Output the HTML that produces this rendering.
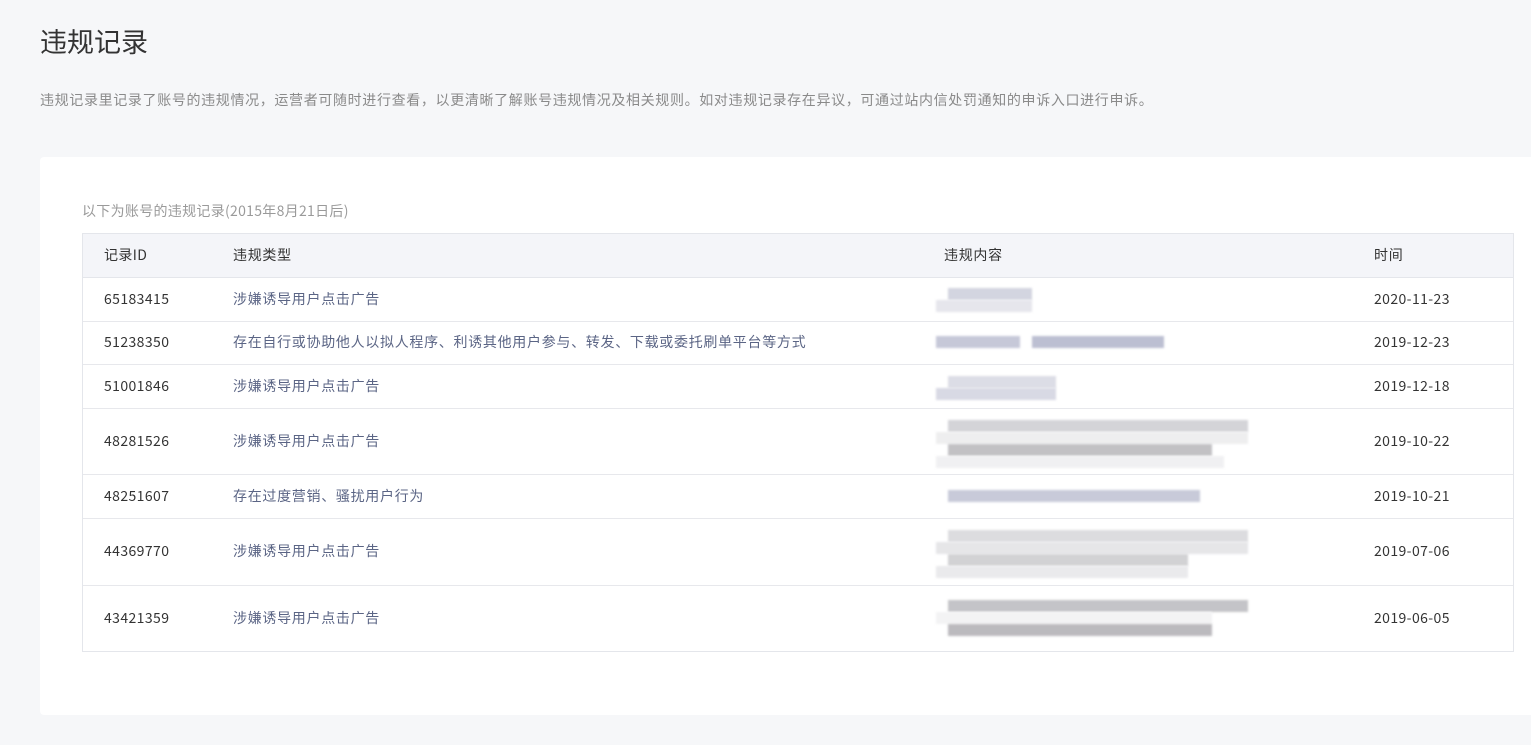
<!DOCTYPE html>
<html><head><meta charset="utf-8"><style>
*{margin:0;padding:0;box-sizing:border-box}
body{width:1531px;height:745px;background:#f6f7f9;font-family:"Noto Sans CJK SC","Liberation Sans",sans-serif;position:relative;overflow:hidden}
.a{position:absolute;white-space:nowrap;line-height:20px}
h1{position:absolute;left:40px;top:22px;font-size:27px;font-weight:normal;color:#333;line-height:38px}
.desc{left:40px;top:90px;font-size:14px;color:#8a8a8a;letter-spacing:0.65px}
.card{position:absolute;left:40px;top:157px;width:1500px;height:558px;background:#fff;border-radius:4px}
.cap{left:82px;top:201px;font-size:14px;color:#9a9a9a;letter-spacing:0.3px}
.tbl{position:absolute;left:82px;top:233px;width:1432px;height:419px;border:1px solid #e4e6eb}
.hd{position:absolute;left:0;top:0;width:100%;height:44px;background:#f4f5f9;border-bottom:1px solid #e4e6eb}
.ln{position:absolute;left:0;width:100%;height:1px;background:#e7e8ec}
.t{font-size:14px;color:#333;letter-spacing:0.4px}
.ty{font-size:14px;color:#5b6585;letter-spacing:0.7px}
.bl{position:absolute;height:12px;filter:blur(1px)}
</style></head><body>
<h1>违规记录</h1>
<div class="a desc">违规记录里记录了账号的违规情况，运营者可随时进行查看，以更清晰了解账号违规情况及相关规则。如对违规记录存在异议，可通过站内信处罚通知的申诉入口进行申诉。</div>
<div class="card"></div>
<div class="a cap">以下为账号的违规记录(2015年8月21日后)</div>
<div class="tbl">
<div class="hd"></div>
<div class="ln" style="top:87px"></div>
<div class="ln" style="top:130px"></div>
<div class="ln" style="top:174px"></div>
<div class="ln" style="top:240px"></div>
<div class="ln" style="top:284px"></div>
<div class="ln" style="top:351px"></div>
</div>
<div class="a t" style="left:104px;top:245px">记录ID</div>
<div class="a ty" style="left:233px;top:245px;color:#333">违规类型</div>
<div class="a ty" style="left:944px;top:245px;color:#333">违规内容</div>
<div class="a ty" style="left:1374px;top:245px;color:#333">时间</div>

<div class="a t" style="left:104px;top:289px">65183415</div><div class="a ty" style="left:233px;top:289px">涉嫌诱导用户点击广告</div><div class="a t" style="left:1374px;top:289px">2020-11-23</div>
<div class="a t" style="left:104px;top:332px">51238350</div><div class="a ty" style="left:233px;top:332px">存在自行或协助他人以拟人程序、利诱其他用户参与、转发、下载或委托刷单平台等方式</div><div class="a t" style="left:1374px;top:332px">2019-12-23</div>
<div class="a t" style="left:104px;top:376px">51001846</div><div class="a ty" style="left:233px;top:376px">涉嫌诱导用户点击广告</div><div class="a t" style="left:1374px;top:376px">2019-12-18</div>
<div class="a t" style="left:104px;top:431px">48281526</div><div class="a ty" style="left:233px;top:431px">涉嫌诱导用户点击广告</div><div class="a t" style="left:1374px;top:431px">2019-10-22</div>
<div class="a t" style="left:104px;top:486px">48251607</div><div class="a ty" style="left:233px;top:486px">存在过度营销、骚扰用户行为</div><div class="a t" style="left:1374px;top:486px">2019-10-21</div>
<div class="a t" style="left:104px;top:541px">44369770</div><div class="a ty" style="left:233px;top:541px">涉嫌诱导用户点击广告</div><div class="a t" style="left:1374px;top:541px">2019-07-06</div>
<div class="a t" style="left:104px;top:608px">43421359</div><div class="a ty" style="left:233px;top:608px">涉嫌诱导用户点击广告</div><div class="a t" style="left:1374px;top:608px">2019-06-05</div>

<div class="bl" style="left:948px;top:288px;width:84px;background:#d3d5e0"></div>
<div class="bl" style="left:936px;top:300px;width:96px;background:#e6e6ec"></div>
<div class="bl" style="left:936px;top:336px;width:84px;background:#c6c8d8"></div>
<div class="bl" style="left:1032px;top:336px;width:132px;background:#bcbfd2"></div>
<div class="bl" style="left:948px;top:376px;width:108px;background:#dcdde6"></div>
<div class="bl" style="left:936px;top:388px;width:120px;background:#d8d9e4"></div>
<div class="bl" style="left:948px;top:420px;width:300px;background:#d4d4d8"></div>
<div class="bl" style="left:936px;top:432px;width:312px;background:#eeeeef"></div>
<div class="bl" style="left:948px;top:444px;width:264px;background:#c2c1c4"></div>
<div class="bl" style="left:936px;top:456px;width:288px;background:#f0f0f2"></div>
<div class="bl" style="left:948px;top:490px;width:252px;background:#c8cad9"></div>
<div class="bl" style="left:948px;top:530px;width:300px;background:#dcdcdf"></div>
<div class="bl" style="left:936px;top:542px;width:312px;background:#e6e6e8"></div>
<div class="bl" style="left:948px;top:554px;width:240px;background:#d2d2d4"></div>
<div class="bl" style="left:936px;top:566px;width:252px;background:#eaeaec"></div>
<div class="bl" style="left:948px;top:600px;width:300px;background:#c4c4c8"></div>
<div class="bl" style="left:936px;top:612px;width:276px;background:#f3f3f4"></div>
<div class="bl" style="left:948px;top:624px;width:264px;background:#bbbabe"></div>
</body></html>
